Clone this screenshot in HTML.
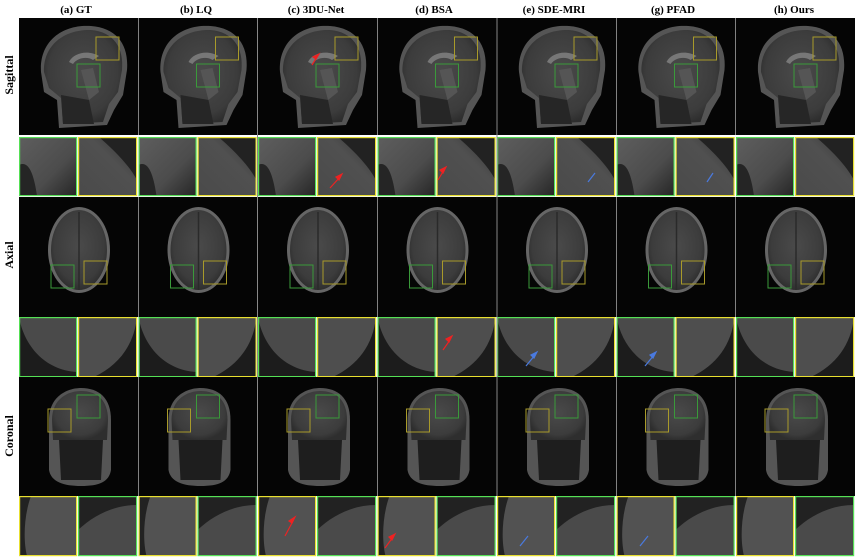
<!DOCTYPE html>
<html><head><meta charset="utf-8"><style>
html,body{margin:0;padding:0;background:#fff;width:858px;height:560px;overflow:hidden}
svg{display:block}
text{font-family:"Liberation Serif",serif;font-weight:bold;fill:#000}
</style></head><body>
<svg width="858" height="560" viewBox="0 0 858 560" xmlns="http://www.w3.org/2000/svg">
<defs>
<radialGradient id="br" cx="50%" cy="45%" r="55%"><stop offset="0" stop-color="#4a4a4a"/><stop offset="0.8" stop-color="#3c3c3c"/><stop offset="1" stop-color="#2e2e2e"/></radialGradient>
<linearGradient id="zp" x1="0" y1="0" x2="1" y2="1"><stop offset="0" stop-color="#5e5e5e"/><stop offset="0.6" stop-color="#4c4c4c"/><stop offset="1" stop-color="#252525"/></linearGradient>
<linearGradient id="zp2" x1="1" y1="0" x2="0" y2="1"><stop offset="0" stop-color="#303030"/><stop offset="0.4" stop-color="#505050"/><stop offset="1" stop-color="#4a4a4a"/></linearGradient>
<g id="sag">
<rect x="0" y="18" width="119" height="117" fill="#050505"/>
<path d="M22 72 C20 40 45 24 72 26 C98 28 110 45 108 70 L104 95 L95 110 L88 125 L40 128 L38 100 L25 92 Z" fill="#555"/>
<path d="M25 72 C24 44 47 29 72 30 C95 32 105 48 103 70 L99 92 L90 104 L84 122 L44 124 L42 98 L30 88 Z" fill="url(#br)"/>
<path d="M50 62 C55 52 70 50 80 56 L74 60 C68 56 58 58 54 64 Z" fill="#777"/>
<path d="M62 70 L74 68 L80 92 L70 100 Z" fill="#555"/>
<path d="M42 95 L70 100 L75 124 L44 124 Z" fill="#262626"/>
<rect x="77" y="37" width="23" height="23" fill="none" stroke="#a89a2a" stroke-width="1"/>
<rect x="58" y="64" width="23" height="23" fill="none" stroke="#3a9a3a" stroke-width="1"/>
</g>
<g id="ax">
<rect x="0" y="197" width="119" height="120" fill="#050505"/>
<ellipse cx="60" cy="250" rx="31" ry="43" fill="#666"/>
<ellipse cx="60" cy="250" rx="28" ry="40" fill="url(#br)"/>
<line x1="60" y1="212" x2="60" y2="290" stroke="#2a2a2a" stroke-width="1.5"/>
<rect x="32" y="265" width="23" height="23" fill="none" stroke="#3a9a3a" stroke-width="1"/>
<rect x="65" y="261" width="23" height="23" fill="none" stroke="#a89a2a" stroke-width="1"/>
</g>
<g id="co">
<rect x="0" y="377" width="119" height="119" fill="#050505"/>
<path d="M30 420 C30 395 50 388 62 388 C80 388 92 398 92 420 L92 470 C90 482 80 486 62 486 C45 486 32 482 30 470 Z" fill="#555"/>
<path d="M33 420 C33 398 50 391 62 391 C78 391 89 400 89 420 L88 440 L34 440 Z" fill="url(#br)"/>
<path d="M40 440 L84 440 L82 480 L42 480 Z" fill="#1e1e1e"/>
<rect x="29" y="409" width="23" height="23" fill="none" stroke="#a89a2a" stroke-width="1"/>
<rect x="58" y="395" width="23" height="23" fill="none" stroke="#3a9a3a" stroke-width="1"/>
</g>
<g id="zs">
<rect x="0" y="137" width="58" height="59" fill="url(#zp)"/>
<rect x="59" y="137" width="59" height="59" fill="url(#zp2)"/>
<path d="M0 165 C10 160 15 175 18 196 L0 196 Z" fill="#252525"/>
<path d="M80 137 C95 150 110 165 118 180 L118 137 Z" fill="#222"/>
<rect x="0.6" y="137.6" width="57" height="58" fill="none" stroke="#55e055" stroke-width="1.2"/>
<rect x="59.6" y="137.6" width="58" height="58" fill="none" stroke="#e8e030" stroke-width="1.2"/>
</g>
<g id="za">
<rect x="0" y="317" width="58" height="60" fill="#4a4a4a"/>
<rect x="59" y="317" width="59" height="60" fill="#4e4e4e"/>
<path d="M0 317 C5 345 25 370 58 372 L58 377 L0 377 Z" fill="#1c1c1c"/>
<path d="M118 317 C115 345 100 365 75 377 L118 377 Z" fill="#1c1c1c"/>
<rect x="0.6" y="317.6" width="57" height="59" fill="none" stroke="#55e055" stroke-width="1.2"/>
<rect x="59.6" y="317.6" width="58" height="59" fill="none" stroke="#e8e030" stroke-width="1.2"/>
</g>
<g id="zc">
<rect x="0" y="496" width="58" height="60" fill="#525252"/>
<rect x="59" y="496" width="59" height="60" fill="#4a4a4a"/>
<path d="M0 496 L12 496 C5 515 4 540 8 556 L0 556 Z" fill="#222"/>
<path d="M59 496 L118 496 L118 505 C95 505 75 515 59 530 Z" fill="#222"/>
<rect x="0.6" y="496.6" width="57" height="59" fill="none" stroke="#e8e030" stroke-width="1.2"/>
<rect x="59.6" y="496.6" width="58" height="59" fill="none" stroke="#55e055" stroke-width="1.2"/>
</g>
<g id="col"><use href="#sag"/><use href="#zs"/><use href="#ax"/><use href="#za"/><use href="#co"/><use href="#zc"/></g>
</defs>
<use href="#col" x="19"/>
<use href="#col" x="138.5"/>
<use href="#col" x="258"/>
<use href="#col" x="377.5"/>
<use href="#col" x="497"/>
<use href="#col" x="616.5"/>
<use href="#col" x="736"/>
<line x1="257.5" y1="18" x2="257.5" y2="496" stroke="#888" stroke-width="1"/>
<line x1="497" y1="18" x2="497" y2="496" stroke="#888" stroke-width="1"/>
<g font-size="11" text-anchor="middle">
<text x="76" y="13">(a) GT</text>
<text x="196" y="13">(b) LQ</text>
<text x="316" y="13">(c) 3DU-Net</text>
<text x="434" y="13">(d) BSA</text>
<text x="554" y="13">(e) SDE-MRI</text>
<text x="673" y="13">(g) PFAD</text>
<text x="794" y="13">(h) Ours</text>
</g>
<g font-size="12" text-anchor="middle">
<text transform="translate(13,75) rotate(-90)">Sagittal</text>
<text transform="translate(13,255) rotate(-90)">Axial</text>
<text transform="translate(13,436) rotate(-90)">Coronal</text>
</g>
<g stroke="#e22" stroke-width="1.2" fill="#e22">
<line x1="330" y1="188" x2="340" y2="177"/><path d="M342 174 L336 177 L339 180 Z"/>
<line x1="438" y1="180" x2="444" y2="170"/><path d="M446 167 L440 170 L443 173 Z"/>
<line x1="443" y1="350" x2="450" y2="340"/><path d="M452 336 L446 339 L449 342 Z"/>
<line x1="285" y1="536" x2="293" y2="521"/><path d="M295 517 L289 521 L292 523 Z"/>
<line x1="385" y1="548" x2="393" y2="537"/><path d="M395 534 L389 537 L392 540 Z"/>
<line x1="312" y1="65" x2="317" y2="57"/><path d="M319 54 L313 57 L316 59 Z"/>
</g>
<g stroke="#4a7adf" stroke-width="1.2" fill="#4a7adf">
<line x1="588" y1="182" x2="595" y2="173"/>
<line x1="526" y1="366" x2="535" y2="355"/><path d="M537 352 L531 355 L534 358 Z"/>
<line x1="645" y1="366" x2="654" y2="355"/><path d="M656 352 L650 355 L653 358 Z"/>
<line x1="707" y1="182" x2="713" y2="173"/>
<line x1="520" y1="546" x2="528" y2="536"/>
<line x1="640" y1="546" x2="648" y2="536"/>
</g>
</svg>
</body></html>
